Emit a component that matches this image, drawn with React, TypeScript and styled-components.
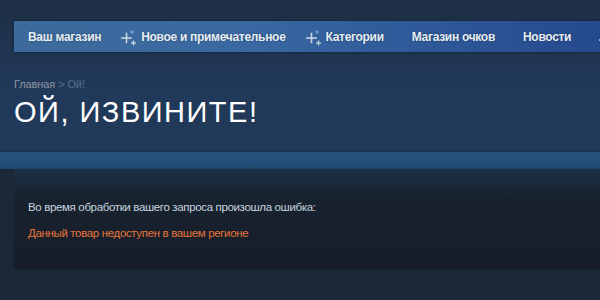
import styled, { createGlobalStyle } from "styled-components";

const GlobalStyle = createGlobalStyle`
    html, body {
        margin: 0;
        padding: 0;
        background: #1b2838;
    }
    body {
        font-family: "Liberation Sans", Arial, sans-serif;
    }
`

type NavItem = {
    label: string
    isNew?: boolean
}

const navItems: NavItem[] = [
    { label: "Ваш магазин" },
    { label: "Новое и примечательное", isNew: true },
    { label: "Категории", isNew: true },
    { label: "Магазин очков" },
    { label: "Новости" },
    { label: "Лаборатория" },
]

function SparkleIcon() {
    return (
        <svg width="18" height="17" viewBox="0 0 18 17" className="sparkle">
            <g stroke="#c7d5e0" strokeWidth="1.6" strokeLinecap="square">
                <line x1="1" y1="9" x2="10" y2="9" />
                <line x1="5.5" y1="4.5" x2="5.5" y2="13.5" />
            </g>
            <g stroke="#9fc1e0" strokeWidth="1" opacity="0.7">
                <line x1="9" y1="3" x2="13" y2="3" />
                <line x1="11" y1="1" x2="11" y2="5" />
            </g>
            <g stroke="#c7d5e0" strokeWidth="1.3">
                <line x1="10" y1="14" x2="15" y2="14" />
                <line x1="12.5" y1="11.5" x2="12.5" y2="16.5" />
            </g>
        </svg>
    )
}

export default function App() {
    return (
        <Page>
            <GlobalStyle />
            <Header>
                <NavBar>
                    {navItems.map((item) => (
                        <NavLink key={item.label} $isNew={!!item.isNew}>
                            {item.isNew && <SparkleIcon />}
                            <span>{item.label}</span>
                        </NavLink>
                    ))}
                </NavBar>
                <TitleArea>
                    <Breadcrumbs>
                        <a>Главная</a>
                        <span className="current"> &gt; Ой!</span>
                    </Breadcrumbs>
                    <PageTitle>ОЙ, ИЗВИНИТЕ!</PageTitle>
                </TitleArea>
            </Header>
            <Band />
            <ErrorPanel>
                <p>Во время обработки вашего запроса произошла ошибка:</p>
                <ErrorMessage>Данный товар недоступен в вашем регионе</ErrorMessage>
            </ErrorPanel>
        </Page>
    )
}

const Page = styled.div`
    width: 600px;
    height: 300px;
    overflow: hidden;
    background: #1b2838;
`

const Header = styled.div`
    box-sizing: border-box;
    height: 152px;
    padding-top: 21px;
    background: linear-gradient(180deg, #1d2f45 0%, #21395a 60%, #213a58 100%);
    border-bottom: 1px solid #1a3350;
`

const NavBar = styled.nav`
    box-sizing: border-box;
    margin-left: 14px;
    width: 640px;
    height: 31px;
    display: flex;
    align-items: center;
    padding-left: 14px;
    overflow: hidden;
    background: linear-gradient(90deg, #3d6a9b 0%, #3a69a2 35%, #2e5898 65%, #23458b 100%);
    box-shadow: 0 0 3px rgba(0, 0, 0, 0.4);
`

const NavLink = styled.div<{ $isNew: boolean }>`
    display: flex;
    align-items: center;
    margin-right: 28px;
    margin-left: ${({ $isNew }) => ($isNew ? "-8px" : "0")};
    font-size: 12px;
    letter-spacing: -0.3px;
    font-weight: bold;
    color: #e5eef5;
    text-shadow: 0 0 2px rgba(0, 0, 0, 0.4);
    white-space: nowrap;

    .sparkle {
        margin-right: 2px;
        margin-top: 2px;
    }
`

const TitleArea = styled.div`
    padding: 25px 0 0 14px;
`

const Breadcrumbs = styled.div`
    font-size: 11px;
    letter-spacing: -0.1px;
    color: #8f98a0;
    line-height: 14px;

    .current {
        color: #56718a;
    }
`

const PageTitle = styled.h1`
    margin: 4px 0 0;
    font-size: 29px;
    font-weight: normal;
    letter-spacing: 1.5px;
    line-height: 34px;
    color: #ffffff;
`

const Band = styled.div`
    height: 17px;
    background: linear-gradient(180deg, #24527b 0%, #22507a 70%, #1f4466 100%);
`

const ErrorPanel = styled.div`
    box-sizing: border-box;
    margin-left: 14px;
    height: 100px;
    padding: 30px 14px 0;
    background: linear-gradient(180deg, #1c2f44 0%, #18222f 30%, #171d28 100%);
    font-size: 11.5px;
    letter-spacing: -0.35px;

    p {
        margin: 0;
        color: #c6d4df;
        line-height: 16px;
    }
`

const ErrorMessage = styled.p`
    && {
        margin-top: 10px;
        color: #e8743a;
    }
`
